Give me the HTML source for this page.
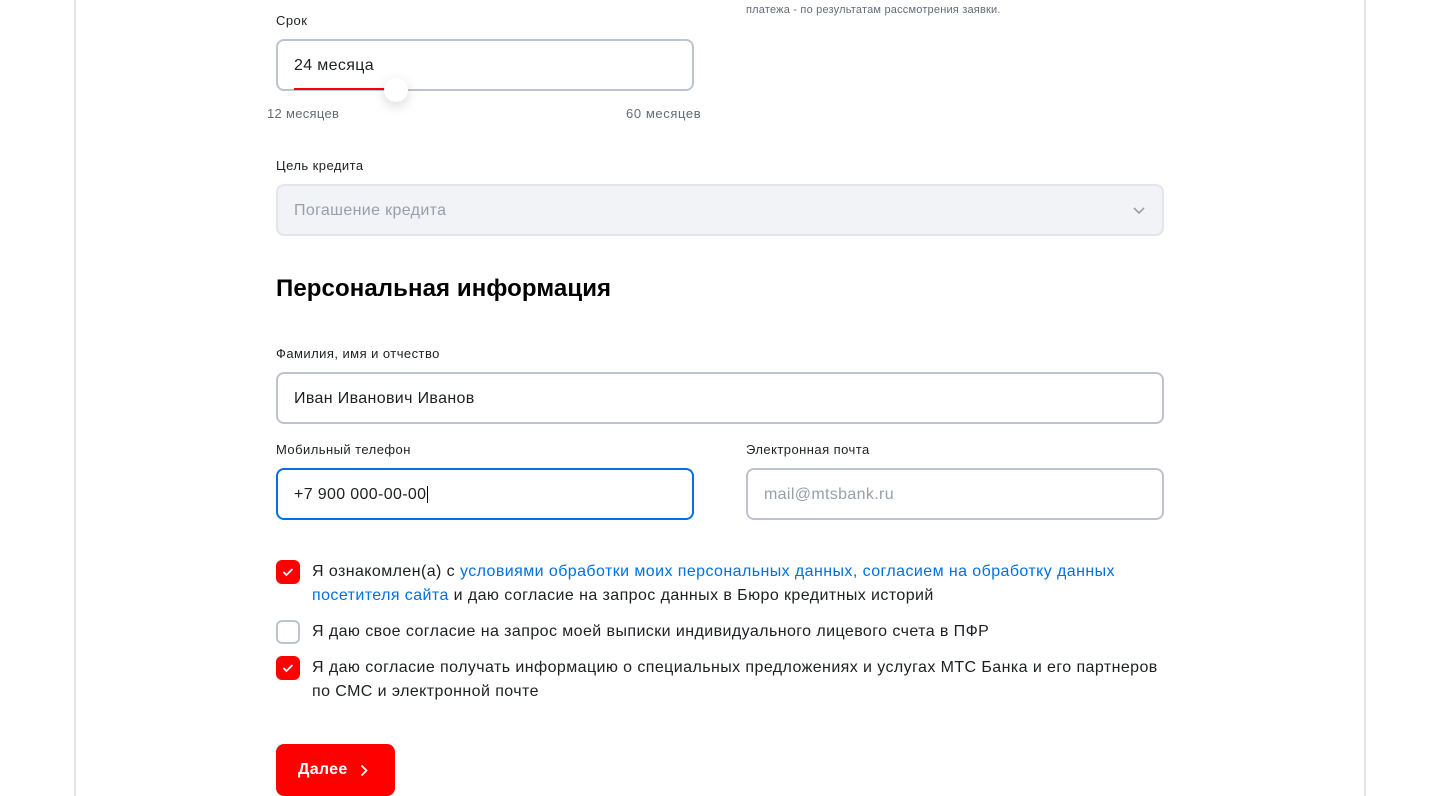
<!DOCTYPE html>
<html><head><meta charset="utf-8"><style>
*{box-sizing:border-box;margin:0;padding:0}
body{width:1440px;height:796px;overflow:hidden;background:#fff;font-family:"Liberation Sans","DejaVu Sans",sans-serif;color:#000;position:relative}
.a{position:absolute}
.vl{position:absolute;top:0;width:2px;height:796px;background:#e2e4ec}
.lbl{font-size:13px;color:#1d2023;letter-spacing:.45px}
.inp{position:absolute;height:52px;border:2px solid #bcc3d0;border-radius:8px;background:#fff;font-size:16px;padding:0 16px;line-height:50px;color:#1d2023;letter-spacing:.35px}
.cb{position:absolute;left:276px;width:24px;height:24px;border-radius:6px;background:#ff0000}
.cb svg{position:absolute;left:6px;top:7px}
.t{position:absolute;left:312px;font-size:16px;line-height:24px;color:#1d2023;letter-spacing:.42px;white-space:nowrap}
.lk{color:#0070e5}
</style></head><body>
<div class="vl" style="left:74px"></div>
<div class="vl" style="left:1364px"></div>
<div class="a" style="left:746px;top:4px;font-size:11px;color:#626c77;letter-spacing:.2px">платежа - по результатам рассмотрения заявки.</div>
<div class="a lbl" style="left:276px;top:13px">Срок</div>
<div class="inp" style="left:276px;top:39px;width:418px">24 месяца</div>
<div class="a" style="left:294px;top:88px;width:96px;height:2px;background:#ff0000"></div>
<div class="a" style="left:384px;top:78px;width:24px;height:24px;border-radius:50%;background:#fff;box-shadow:0 4px 12px rgba(0,0,0,.15)"></div>
<div class="a" style="left:267px;top:106px;font-size:13px;color:#626c77;letter-spacing:.3px">12 месяцев</div>
<div class="a" style="left:626px;top:106px;font-size:13px;color:#626c77;letter-spacing:.6px">60 месяцев</div>
<div class="a lbl" style="left:276px;top:158px">Цель кредита</div>
<div class="inp" style="left:276px;top:184px;width:888px;background:#f2f3f7;border-color:#e2e5eb;color:#969fa8">Погашение кредита
<svg style="position:absolute;right:16px;top:19px" width="14" height="10" viewBox="0 0 14 10"><path d="M2 3l5 5 5-5" fill="none" stroke="#969fa8" stroke-width="1.6"/></svg></div>
<div class="a" style="left:276px;top:275px;font-size:24px;font-weight:bold;color:#000;letter-spacing:.1px">Персональная информация</div>
<div class="a lbl" style="left:276px;top:346px">Фамилия, имя и отчество</div>
<div class="inp" style="left:276px;top:372px;width:888px">Иван Иванович Иванов</div>
<div class="a lbl" style="left:276px;top:442px">Мобильный телефон</div>
<div class="inp" style="left:276px;top:468px;width:418px;border-color:#0070e5">+7 900 000-00-00<span style="border-left:1px solid #000;margin-left:1px"></span></div>
<div class="a lbl" style="left:746px;top:442px">Электронная почта</div>
<div class="inp" style="left:746px;top:468px;width:418px;color:#969fa8">mail@mtsbank.ru</div>
<div class="cb" style="top:560px"><svg width="12" height="10" viewBox="0 0 12 10"><path d="M1.5 5l3 3 6-6" fill="none" stroke="#fff" stroke-width="1.8"/></svg></div>
<div class="t" style="top:560px">Я ознакомлен(а) с <span class="lk">условиями обработки моих персональных данных</span><span class="lk">, согласием на обработку данных<br>посетителя сайта</span> и даю согласие на запрос данных в Бюро кредитных историй</div>
<div class="cb" style="top:620px;background:#fff;border:2px solid #bcc3d0"></div>
<div class="t" style="top:620px">Я даю свое согласие на запрос моей выписки индивидуального лицевого счета в ПФР</div>
<div class="cb" style="top:656px"><svg width="12" height="10" viewBox="0 0 12 10"><path d="M1.5 5l3 3 6-6" fill="none" stroke="#fff" stroke-width="1.8"/></svg></div>
<div class="t" style="top:656px">Я даю согласие получать информацию о специальных предложениях и услугах МТС Банка и его партнеров<br>по СМС и электронной почте</div>
<div class="a" style="left:276px;top:744px;width:119px;height:52px;background:#ff0000;border-radius:8px;color:#fff;font-weight:bold;font-size:16px;line-height:52px;padding-left:22px;letter-spacing:.3px">Далее
<svg style="position:absolute;left:84px;top:20px" width="8" height="13" viewBox="0 0 8 13"><path d="M1.5 1.5l5 5-5 5" fill="none" stroke="#fff" stroke-width="1.8"/></svg></div>
</body></html>
